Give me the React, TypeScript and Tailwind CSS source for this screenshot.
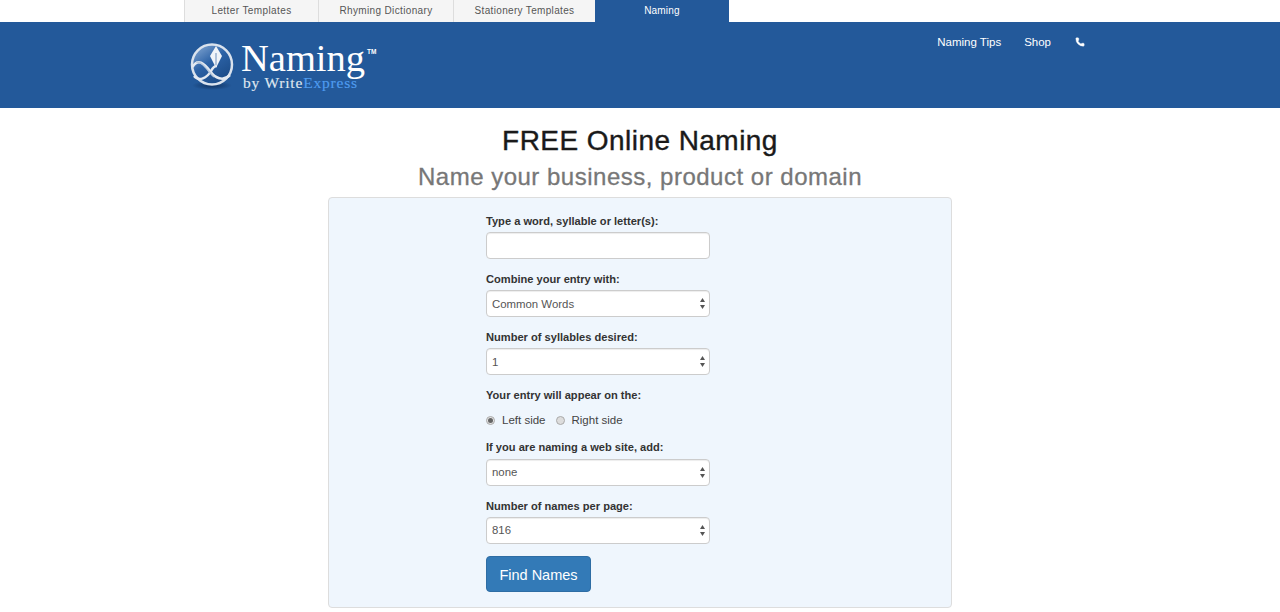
import React from 'react';
import { Phone } from 'lucide-react';

const TABS = [
  { label: 'Letter Templates', width: 'w-[134px]', tracking: 'tracking-[0.4px]' },
  { label: 'Rhyming Dictionary', width: 'w-[135px]', tracking: 'tracking-[0.35px]' },
  { label: 'Stationery Templates', width: 'w-[142px]', tracking: 'tracking-[0.33px]' },
];

const Logo = () => (
  <div className="flex items-start pt-[13px]">
    <svg width="46" height="50" viewBox="0 0 46 50" className="mt-[6px] -ml-[1px] shrink-0">
      <defs>
        <linearGradient id="orb" x1="0" y1="0" x2="0.7" y2="1">
          <stop offset="0" stopColor="#8fb0d8" />
          <stop offset="0.5" stopColor="#2c62a6" />
          <stop offset="1" stopColor="#1a4a86" />
        </linearGradient>
        <radialGradient id="shade">
          <stop offset="0" stopColor="#0e2f5c" stopOpacity="0.9" />
          <stop offset="1" stopColor="#0e2f5c" stopOpacity="0" />
        </radialGradient>
      </defs>
      <ellipse cx="23" cy="44.5" rx="20" ry="4.5" fill="url(#shade)" />
      <circle cx="23" cy="23.5" r="20" fill="url(#orb)" stroke="#d9e2ed" strokeWidth="2.5" />
      <path d="M27 5 L33 15 L28 25 L26 25 L21 15 Z" fill="#f1f4f8" />
      <path d="M27 12 L27 24" stroke="#6d8fbc" strokeWidth="1" />
      <path d="M3.5 26 C9 17 15 22 21 30 C26 37 34 41 41 34" fill="none" stroke="#e3e9f1" strokeWidth="2.5" />
      <path d="M5 35 C10 41 18 37 22 30 C24 26 26 25 28 25" fill="none" stroke="#e3e9f1" strokeWidth="2.5" />
      <path d="M7 21 C13 20 18 29 25 36" fill="none" stroke="#b9c9dc" strokeWidth="1.5" />
    </svg>
    <div className="ml-[6px] font-['Liberation_Serif',serif]">
      <div className="flex items-start h-[40px] pt-[7px]">
        <span className="text-[38.5px] leading-[32px] text-white">Naming</span>
        <span className="text-[6.5px] font-bold leading-none text-white mt-[7px] ml-[2px] font-['Liberation_Sans',sans-serif]">TM</span>
      </div>
      <div className="text-[15.5px] leading-[16px] text-[#dfe6ef] tracking-[0.8px] ml-[2px] [-webkit-text-stroke:0.15px]">
        by Write<span className="text-[#4f9cf0]">Express</span>
      </div>
    </div>
  </div>
);

const Arrows = () => (
  <svg width="5" height="11" viewBox="0 0 5 11" className="absolute right-[5px] top-[8px] pointer-events-none">
    <path d="M2.5 0 L5 4 L0 4 Z M2.5 11 L0 7 L5 7 Z" fill="#555" />
  </svg>
);

const Label = ({ children, gap = 'mb-[3px]' }: { children: React.ReactNode; gap?: string }) => (
  <label className={`block text-[11.1px] font-bold leading-[16px] text-[#333] ${gap}`}>{children}</label>
);

const Select = ({ value, options, pad = 'pt-[2px]' }: { value: string; options: string[]; pad?: string }) => (
  <div className="relative w-[224px] h-[27px]">
    <select
      defaultValue={value}
      className={`w-full h-full appearance-none bg-white border border-[#ccc] rounded-[4px] pl-[5px] ${pad} text-[11.4px] text-[#555] shadow-[inset_0_1px_1px_rgba(0,0,0,0.075)] outline-none`}
    >
      {options.map(o => <option key={o} value={o}>{o}</option>)}
    </select>
    <Arrows />
  </div>
);

export default function App() {
  return (
    <div className="min-h-[612px] bg-white font-['Liberation_Sans',Arial,sans-serif] overflow-hidden">
      {/* Top tabs */}
      <div className="flex h-[22px] pl-[184px]">
        {TABS.map(t => (
          <a
            key={t.label}
            className={`${t.width} ${t.tracking} flex items-center justify-center pb-[1px] bg-[#f5f5f5] border-l border-[#ddd] text-[10px] text-[#555]`}
          >
            {t.label}
          </a>
        ))}
        <a className="w-[134px] flex items-center justify-center pb-[1px] bg-[#23599a] text-[10px] tracking-[0.2px] text-white">Naming</a>
      </div>

      {/* Header */}
      <header className="h-[86px] bg-[#23599a] flex justify-between pl-[190px] pr-[195px]">
        <Logo />
        <nav className="flex items-start pt-[13px] text-[11.5px] leading-[14px] text-white">
          <a>Naming Tips</a>
          <a className="ml-[23px]">Shop</a>
          <Phone className="ml-[24px] mt-[2px] w-[10px] h-[10px] fill-white" strokeWidth={1} />
        </nav>
      </header>

      <h1 className="text-[28px] leading-[31px] text-[#1a1a1a] text-center mt-[17px] tracking-[0.45px] [-webkit-text-stroke:0.4px]">FREE Online Naming</h1>
      <h2 className="text-[24px] leading-[26px] text-[#777] text-center mt-[8px] tracking-[0.5px] [-webkit-text-stroke:0.3px]">Name your business, product or domain</h2>

      {/* Form panel */}
      <main className="w-[624px] h-[411px] mx-auto mt-[7px] bg-[#eff6fd] border border-[#ddd] rounded-[4px] pl-[157px] pt-[15px]">
        <Label>Type a word, syllable or letter(s):</Label>
        <input className="block w-[224px] h-[27px] bg-white border border-[#ccc] rounded-[4px] shadow-[inset_0_1px_1px_rgba(0,0,0,0.075)] outline-none" />

        <div className="mt-[12px]">
          <Label>Combine your entry with:</Label>
          <Select value="Common Words" options={['Common Words']} />
        </div>

        <div className="mt-[12px]">
          <Label>Number of syllables desired:</Label>
          <Select value="1" options={['1', '2', '3']} />
        </div>

        <div className="mt-[12px]">
          <Label>Your entry will appear on the:</Label>
          <div className="flex items-center h-[16px] mt-[10px] text-[11.5px] text-[#444]">
            <span className="-mt-[1px] w-[9px] h-[9px] rounded-full bg-[#e4e4e4] border border-[#aaa] flex items-center justify-center">
              <span className="w-[5px] h-[5px] rounded-full bg-[#666]" />
            </span>
            <span className="ml-[7px]">Left side</span>
            <span className="-mt-[1px] ml-[11px] w-[9px] h-[9px] rounded-full bg-[#ddd] border border-[#aaa]" />
            <span className="ml-[6px]">Right side</span>
          </div>
        </div>

        <div className="mt-[10px]">
          <Label gap="mb-[4px]">If you are naming a web site, add:</Label>
          <Select value="none" options={['none', '.com', '.net']} pad="pt-[1px]" />
        </div>

        <div className="mt-[12px]">
          <Label>Number of names per page:</Label>
          <Select value="816" options={['816']} pad="pt-[1px]" />
        </div>

        <button className="block mt-[12px] w-[105px] h-[36px] pt-[3px] bg-[#337ab7] border border-[#2e6da4] rounded-[4px] text-[14.5px] text-white">
          Find Names
        </button>
      </main>
    </div>
  );
}
